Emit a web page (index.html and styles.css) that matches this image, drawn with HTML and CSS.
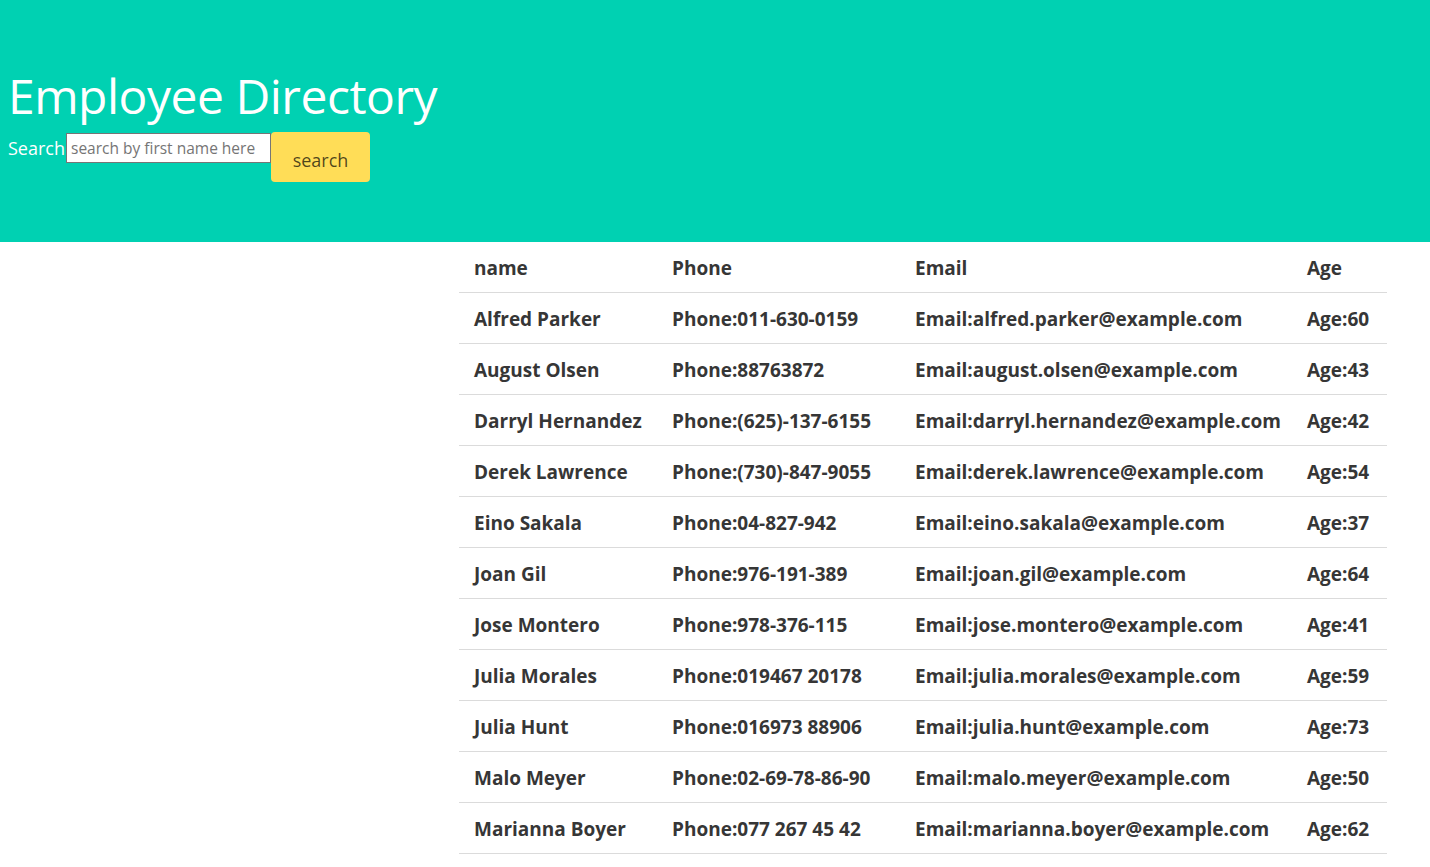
FILE: index.html
```html
<!DOCTYPE html>
<html>
<head>
<meta charset="utf-8">
<title>Employee Directory</title>
<link rel="stylesheet" href="styles.css">
</head>
<body>
<section class="hero">
  <h1 class="title">Employee Directory</h1>
  <form class="search-row">
    <label class="search-label" for="q">Search</label>
    <input id="q" class="search-input" type="text" placeholder="search by first name here">
    <button class="search-btn" type="button">search</button>
  </form>
</section>
<main class="content">
  <table class="table">
    <colgroup>
      <col class="c-name"><col class="c-phone"><col class="c-email"><col class="c-age">
    </colgroup>
    <thead>
      <tr><th>name</th><th>Phone</th><th>Email</th><th>Age</th></tr>
    </thead>
    <tbody>
      <tr><td>Alfred Parker</td><td>Phone:011-630-0159</td><td>Email:alfred.parker@example.com</td><td>Age:60</td></tr>
      <tr><td>August Olsen</td><td>Phone:88763872</td><td>Email:august.olsen@example.com</td><td>Age:43</td></tr>
      <tr><td>Darryl Hernandez</td><td>Phone:(625)-137-6155</td><td>Email:darryl.hernandez@example.com</td><td>Age:42</td></tr>
      <tr><td>Derek Lawrence</td><td>Phone:(730)-847-9055</td><td>Email:derek.lawrence@example.com</td><td>Age:54</td></tr>
      <tr><td>Eino Sakala</td><td>Phone:04-827-942</td><td>Email:eino.sakala@example.com</td><td>Age:37</td></tr>
      <tr><td>Joan Gil</td><td>Phone:976-191-389</td><td>Email:joan.gil@example.com</td><td>Age:64</td></tr>
      <tr><td>Jose Montero</td><td>Phone:978-376-115</td><td>Email:jose.montero@example.com</td><td>Age:41</td></tr>
      <tr><td>Julia Morales</td><td>Phone:019467 20178</td><td>Email:julia.morales@example.com</td><td>Age:59</td></tr>
      <tr><td>Julia Hunt</td><td>Phone:016973 88906</td><td>Email:julia.hunt@example.com</td><td>Age:73</td></tr>
      <tr><td>Malo Meyer</td><td>Phone:02-69-78-86-90</td><td>Email:malo.meyer@example.com</td><td>Age:50</td></tr>
      <tr><td>Marianna Boyer</td><td>Phone:077 267 45 42</td><td>Email:marianna.boyer@example.com</td><td>Age:62</td></tr>
    </tbody>
  </table>
</main>
</body>
</html>
```

FILE: styles.css
```css
html, body {
  margin: 0;
  padding: 0;
  background: #ffffff;
  font-family: "Open Sans", "Noto Sans", "Liberation Sans", sans-serif;
}

.hero {
  background: #00d1b2;
  height: 242px;
  box-sizing: border-box;
  padding: 66px 8px 0;
}

.title {
  margin: 0;
  font-size: 48px;
  font-weight: 400;
  line-height: 60px;
  color: #ffffff;
  letter-spacing: -0.5px;
}

.search-row {
  display: flex;
  align-items: flex-start;
  margin-top: 6px;
}

.search-label {
  color: #ffffff;
  font-size: 18px;
  line-height: 24px;
  margin-top: 4px;
}

.search-input {
  box-sizing: border-box;
  width: 205px;
  height: 30px;
  margin: 1px 0 0 1px;
  border: 1px solid #767676;
  padding: 0 4px;
  font-family: inherit;
  font-size: 15.5px;
  color: #363636;
  background: #fff;
}

.search-input::placeholder {
  color: #757575;
}

.search-btn {
  box-sizing: border-box;
  width: 99px;
  height: 50px;
  border: none;
  border-radius: 4px;
  background: #ffdd57;
  color: rgba(0, 0, 0, 0.7);
  font-family: inherit;
  font-size: 18px;
  padding: 6px 0 0;
}

.content {
  padding-left: 459px;
}

.table {
  border-collapse: collapse;
  table-layout: fixed;
  width: 928px;
  color: #363636;
  font-size: 19px;
}

.c-name { width: 198px; }
.c-phone { width: 243px; }
.c-email { width: 392px; }
.c-age { width: 95px; }

.table th,
.table td {
  padding: 11px 15px 9px;
  line-height: 30px;
  text-align: left;
  font-weight: 700;
  white-space: nowrap;
  border-bottom: 1px solid #dbdbdb;
}
```
